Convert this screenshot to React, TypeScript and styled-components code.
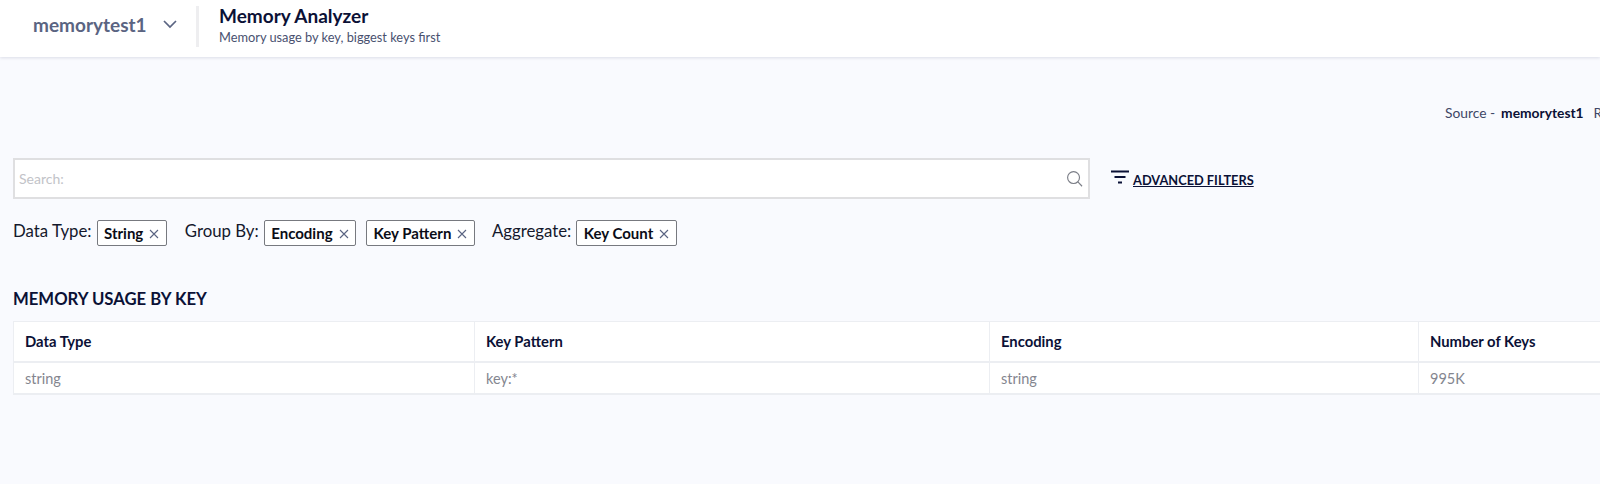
import styled, { createGlobalStyle } from "styled-components";

const GlobalStyle = createGlobalStyle`
  html, body {
    margin: 0;
    padding: 0;
    height: 100%;
    overflow: hidden;
    background: #f9fafe;
    font-family: Lato, "Noto Sans", sans-serif;
    color: #0b1136;
  }
  * { box-sizing: border-box; }
`;

function Close() {
  return (
    <ChipClose viewBox="0 0 10 10" aria-hidden="true">
      <path d="M1 1l8 8M9 1l-8 8" />
    </ChipClose>
  );
}

function App() {
  return (
    <Page>
      <GlobalStyle />
      <Header>
        <DbSelect>
          <DbName>memorytest1</DbName>
          <Chevron viewBox="0 0 14 9" aria-hidden="true">
            <path d="M1 1l6 6 6-6" />
          </Chevron>
        </DbSelect>
        <Divider />
        <TitleBlock>
          <Title>Memory Analyzer</Title>
          <Subtitle>Memory usage by key, biggest keys first</Subtitle>
        </TitleBlock>
      </Header>

      <Content>
        <SourceRow>
          <span>Source -</span>
          <SourceName>memorytest1</SourceName>
          <RefreshedLabel>Refreshed</RefreshedLabel>
        </SourceRow>

        <SearchRow>
          <SearchBox>
            <SearchPlaceholder>Search:</SearchPlaceholder>
            <SearchIcon viewBox="0 0 18 18" aria-hidden="true">
              <circle cx="8" cy="8" r="6.3" />
              <path d="M12.6 12.6l4.4 4.6" />
            </SearchIcon>
          </SearchBox>
          <AdvancedFilters>
            <FilterIcon viewBox="0 0 18 15" aria-hidden="true">
              <path d="M0 1.5h18M3.5 7h11M7 12.5h4" />
            </FilterIcon>
            <FilterLink>ADVANCED FILTERS</FilterLink>
          </AdvancedFilters>
        </SearchRow>

        <ChipRow>
          <ChipLabel>Data Type:</ChipLabel>
          <Chip>String<Close /></Chip>
          <ChipLabel $gap={18}>Group By:</ChipLabel>
          <Chip>Encoding<Close /></Chip>
          <Chip $spaced>Key Pattern<Close /></Chip>
          <ChipLabel $gap={17}>Aggregate:</ChipLabel>
          <Chip>Key Count<Close /></Chip>
        </ChipRow>

        <SectionTitle>MEMORY USAGE BY KEY</SectionTitle>

        <Table>
          <HeadCell>Data Type</HeadCell>
          <HeadCell>Key Pattern</HeadCell>
          <HeadCell>Encoding</HeadCell>
          <HeadCell>Number of Keys</HeadCell>
          <BodyCell>string</BodyCell>
          <BodyCell>key:*</BodyCell>
          <BodyCell>string</BodyCell>
          <BodyCell>995K</BodyCell>
        </Table>
      </Content>
    </Page>
  );
}

const Page = styled.div`
  width: 1600px;
  height: 484px;
  overflow: hidden;
  background: #f9fafe;
`;

const Header = styled.header`
  display: flex;
  align-items: center;
  height: 57px;
  padding-bottom: 7px;
  background: #ffffff;
  box-shadow: 0 1px 3px rgba(40, 50, 90, 0.14);
`;

const DbSelect = styled.div`
  display: flex;
  align-items: center;
  width: 196px;
  padding-left: 33px;
  margin-top: -2px;
`;

const DbName = styled.span`
  width: 130px;
  font-size: 19px;
  font-weight: 700;
  color: #5a6482;
`;

const Chevron = styled.svg`
  width: 14px;
  height: 9px;
  margin-top: 1px;
  fill: none;
  stroke: #5a6482;
  stroke-width: 1.7;
`;

const Divider = styled.div`
  width: 3px;
  height: 41px;
  margin-top: 2px;
  background: #eeeef0;
`;

const TitleBlock = styled.div`
  display: flex;
  flex-direction: column;
  margin: -1px 0 0 20px;
`;

const Title = styled.div`
  font-size: 19px;
  line-height: 24px;
  font-weight: 700;
  color: #0b1136;
`;

const Subtitle = styled.div`
  font-size: 12.8px;
  line-height: 18px;
  color: #49516f;
`;

const Content = styled.main`
  width: 1800px;
  padding: 46px 0 0 13px;
`;

const SourceRow = styled.div`
  display: flex;
  gap: 6px;
  padding-left: 1432px;
  font-size: 13.8px;
  line-height: 19px;
  color: #3f4766;
`;

const SourceName = styled.span`
  font-weight: 700;
  color: #0b1136;
`;

const RefreshedLabel = styled.span`
  margin-left: 4px;
`;

const SearchRow = styled.div`
  display: flex;
  align-items: center;
  margin-top: 36px;
`;

const SearchBox = styled.div`
  display: flex;
  align-items: center;
  justify-content: space-between;
  width: 1077px;
  height: 41px;
  padding: 0 5px 0 4px;
  background: #ffffff;
  border: 2px solid #dfdfe1;
`;

const SearchPlaceholder = styled.span`
  font-size: 14px;
  color: #c2c3c8;
`;

const SearchIcon = styled.svg`
  width: 17px;
  height: 17px;
  fill: none;
  stroke: #7a7d86;
  stroke-width: 1.2;
`;

const AdvancedFilters = styled.div`
  display: flex;
  align-items: flex-start;
  margin-left: 21px;
`;

const FilterIcon = styled.svg`
  width: 18px;
  height: 15px;
  fill: none;
  stroke: #0b1136;
  stroke-width: 2;
`;

const FilterLink = styled.span`
  margin: 2px 0 0 4px;
  font-size: 12.8px;
  line-height: 16px;
  font-weight: 700;
  text-decoration: underline;
  color: #0b1136;
`;

const ChipRow = styled.div`
  display: flex;
  align-items: center;
  height: 26px;
  margin-top: 21px;
`;

const ChipLabel = styled.span<{ $gap?: number }>`
  margin: -5px 5px 0 ${({ $gap }) => $gap ?? 0}px;
  font-size: 16.8px;
  color: #14182c;
`;

const Chip = styled.span<{ $spaced?: boolean }>`
  display: inline-flex;
  align-items: center;
  gap: 6px;
  height: 26px;
  padding: 0 6.5px;
  margin-left: ${({ $spaced }) => ($spaced ? "10px" : "0")};
  font-size: 15px;
  font-weight: 700;
  color: #0b0d17;
  background: #ffffff;
  border: 1px solid #77797f;
  border-radius: 2px;
`;

const ChipClose = styled.svg`
  width: 10px;
  height: 10px;
  margin-top: 2px;
  fill: none;
  stroke: #5a6482;
  stroke-width: 1.1;
`;

const SectionTitle = styled.h2`
  margin: 41px 0 0;
  font-size: 16.7px;
  line-height: 24px;
  font-weight: 700;
  color: #0b1136;
`;

const Table = styled.div`
  display: grid;
  grid-template-columns: 461px 515px 429px 300px;
  grid-template-rows: 41px 32px;
  margin-top: 10px;
  width: 1705px;
  background: #ffffff;
  border-top: 1px solid #eceef2;
  border-left: 1px solid #eceef2;
`;

const HeadCell = styled.div`
  display: flex;
  align-items: center;
  padding: 0 0 1px 11px;
  font-size: 14.8px;
  font-weight: 700;
  color: #0b1136;
  border-right: 1px solid #eceef2;
  border-bottom: 2px solid #eceef2;
`;

const BodyCell = styled.div`
  display: flex;
  align-items: center;
  padding-left: 11px;
  font-size: 14.5px;
  color: #84868f;
  border-right: 1px solid #eceef2;
  border-bottom: 2px solid #eceef2;
`;

export default App;
